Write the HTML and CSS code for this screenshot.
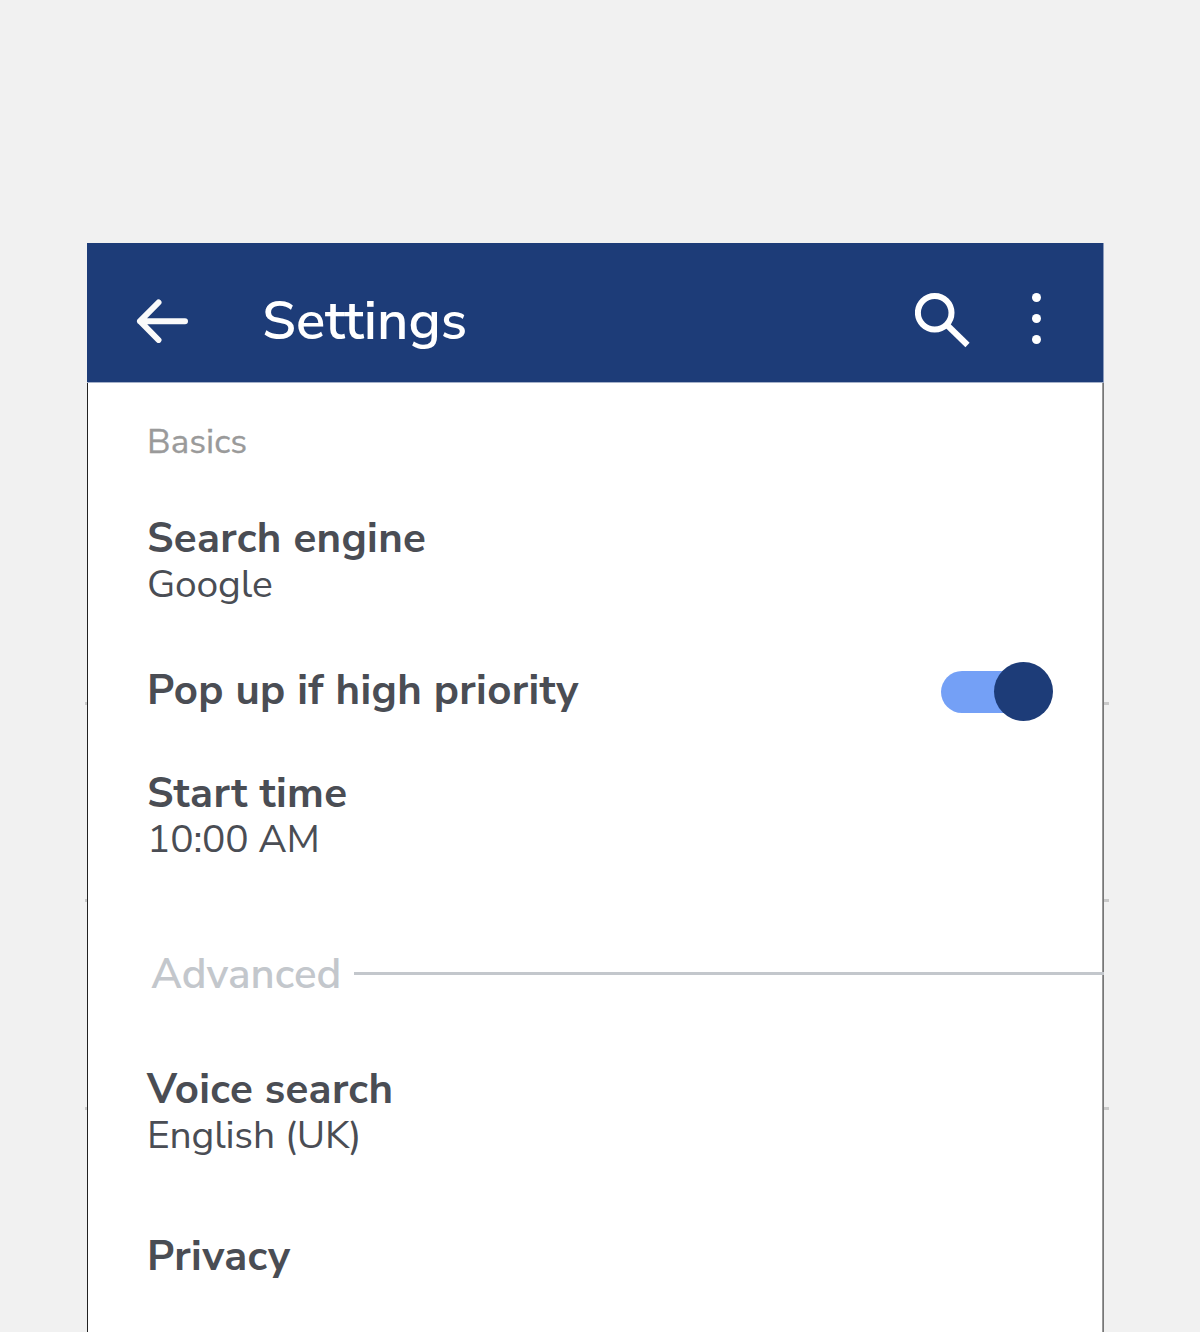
FILE: index.html
```html
<!DOCTYPE html>
<html lang="en">
<head>
<meta charset="utf-8">
<title>Settings</title>
<link rel="stylesheet" href="styles.css">
</head>
<body>
<main class="screen">
  <header class="appbar">
    <svg class="back" width="52" height="44" viewBox="0 0 52 44" fill="none" stroke="#fafafa" stroke-width="6" stroke-linecap="round" stroke-linejoin="round"><path d="M22.500 3.500 4 22.200 22.500 41M4 22.200H49"/></svg>
    <h1 class="heading">Settings</h1>
    <svg class="search" width="56" height="56" viewBox="0 0 56 56" fill="none" stroke="#fff" stroke-width="6"><circle cx="19.700" cy="20.700" r="16.800"/><path d="M32 33 52.500 53"/></svg>
    <svg class="more" width="10" height="52" viewBox="0 0 10 52" fill="#fff"><circle cx="5.500" cy="5.500" r="4.500"/><circle cx="5.500" cy="26.500" r="4.500"/><circle cx="5.500" cy="47.500" r="4.500"/></svg>
  </header>
  <div class="content">
    <h2 class="group">Basics</h2>
    <section class="item engine"><h3 class="title">Search engine</h3><p class="value">Google</p></section>
    <section class="item popup"><h3 class="title">Pop up if high priority</h3><span class="toggle"><span class="knob"></span></span></section>
    <section class="item start"><h3 class="title">Start time</h3><p class="value">10:00 AM</p></section>
    <div class="divider"><h2 class="label">Advanced</h2><span class="rule"></span></div>
    <section class="item voice"><h3 class="title">Voice search</h3><p class="value">English (UK)</p></section>
    <section class="item privacy"><h3 class="title">Privacy</h3></section>
  </div>
  <i class="tick tick-a"></i><i class="tick tick-b"></i><i class="tick tick-c"></i>
</main>
</body>
</html>
```
FILE: styles.css
```css
* { box-sizing: border-box; margin: 0; padding: 0; }
body {
  height: 1332px;
  overflow: hidden;
  background: #f1f1f1;
  font-family: "Nunito Sans", Nunito, Lato, "Open Sans", sans-serif;
  color: #4a4d54;
}
.screen { position: relative; width: 1017px; margin: 243px 0 0 87px; }
.appbar {
  display: flex;
  align-items: flex-start;
  height: 140px;
  padding-left: 49px;
  background: #1d3c78;
  border-right: 1px solid #8c9cbc;
  border-bottom: 1px solid #a5b1c9;
  color: #fff;
}
.back { margin-top: 56px; }
.heading { width: 211px; margin: 46px 0 0 74px; font-size: 54.5px; line-height: 64px; font-weight: 600; white-space: nowrap; }
.search { margin: 49px 0 0 442px; }
.more { margin: 49px 0 0 60px; overflow: visible; }
.content {
  height: 949px;
  padding: 36px 0 0 59px;
  background: #fff;
  border-left: 1px solid #222;
  border-right: 1px solid #777;
  box-shadow: inset -1px 0 #999;
}
h2, h3, p { line-height: 46px; white-space: nowrap; }
.group { font-size: 35px; font-weight: 400; color: #9a9a9a; -webkit-text-stroke: 0.3px #9a9a9a; }
.title { font-size: 42px; font-weight: 700; letter-spacing: 0.33px; }
.value { font-size: 39px; font-weight: 400; letter-spacing: -0.2px; }
.engine { margin-top: 51px; }
.popup { display: flex; justify-content: space-between; height: 46px; margin-top: 60px; padding-right: 50px; }
.toggle { position: relative; width: 112px; height: 42px; margin-top: 3px; border-radius: 21px; background: linear-gradient(90deg, #74a0f6 85px, transparent 85px); }
.knob { position: absolute; right: 0; top: -9px; width: 59px; height: 59px; border-radius: 50%; background: #1d3c78; }
.start { margin-top: 57px; }
.divider { display: flex; align-items: center; margin: 89px -1px 0 4px; color: #c3c7cc; }
.label { width: 203px; font-size: 42px; font-weight: 600; }
.rule { z-index: 1; flex: 1; height: 3px; background: #c3c7cc; transform: translateY(-2px); }
.voice { margin-top: 69px; }
.privacy { margin-top: 75px; }
.tick { position: absolute; z-index: -1; left: -2px; right: -5px; height: 3px; background: #c9c9c9; }
.tick-a { top: 459px; }
.tick-b { top: 656px; }
.tick-c { top: 864px; }
```
